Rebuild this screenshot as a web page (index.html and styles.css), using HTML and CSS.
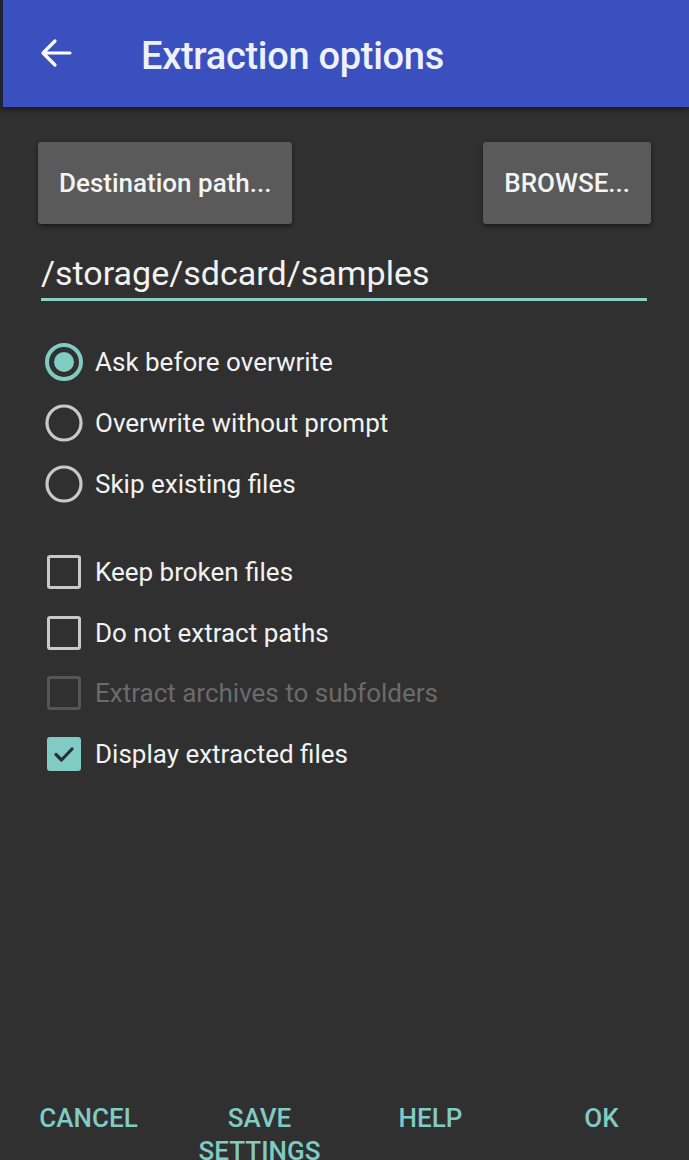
FILE: index.html
```html
<!DOCTYPE html>
<html lang="en">
<head>
  <meta charset="UTF-8" />
  <title>Extraction options</title>
  <meta name="viewport" content="width=device-width, initial-scale=1" />
  <link rel="stylesheet" href="styles.css">
</head>
<body>
  <div class="screen">
    <header class="toolbar">
      <svg class="back" width="36" height="36" viewBox="0 0 36 36">
        <path d="M32 18H6M17 6L5 18l12 12" fill="none" stroke="#fff" stroke-width="3.2" stroke-linecap="round" stroke-linejoin="round"/>
      </svg>
      <h1>Extraction options</h1>
    </header>

    <main class="content">
      <div class="path-buttons">
        <button class="btn">Destination path...</button>
        <button class="btn">BROWSE...</button>
      </div>

      <div class="path-field">/storage/sdcard/samples</div>

      <div class="group">
        <div class="row">
          <span class="slot">
            <svg width="40" height="40" viewBox="0 0 40 40"><circle cx="20" cy="20" r="17" fill="none" stroke="#80cbc4" stroke-width="4"/><circle cx="20" cy="20" r="10" fill="#80cbc4"/></svg>
          </span>
          <span class="label">Ask before overwrite</span>
        </div>
        <div class="row">
          <span class="slot">
            <svg width="40" height="40" viewBox="0 0 40 40"><circle cx="20" cy="20" r="17" fill="none" stroke="#c9c9c9" stroke-width="3.2"/></svg>
          </span>
          <span class="label">Overwrite without prompt</span>
        </div>
        <div class="row">
          <span class="slot">
            <svg width="40" height="40" viewBox="0 0 40 40"><circle cx="20" cy="20" r="17" fill="none" stroke="#c9c9c9" stroke-width="3.2"/></svg>
          </span>
          <span class="label">Skip existing files</span>
        </div>
      </div>

      <div class="group checks">
        <div class="row">
          <span class="slot"><span class="box"></span></span>
          <span class="label">Keep broken files</span>
        </div>
        <div class="row">
          <span class="slot"><span class="box"></span></span>
          <span class="label">Do not extract paths</span>
        </div>
        <div class="row disabled">
          <span class="slot"><span class="box"></span></span>
          <span class="label">Extract archives to subfolders</span>
        </div>
        <div class="row">
          <span class="slot">
            <span class="box checked">
              <svg width="26" height="26" viewBox="0 0 26 26"><path d="M5 13.5l5.5 5.5L21 8" fill="none" stroke="#243238" stroke-width="3.2" stroke-linecap="round" stroke-linejoin="round"/></svg>
            </span>
          </span>
          <span class="label">Display extracted files</span>
        </div>
      </div>
    </main>

    <footer class="actions">
      <span class="action">CANCEL</span>
      <span class="action">SAVE<br>SETTINGS</span>
      <span class="action">HELP</span>
      <span class="action">OK</span>
    </footer>
  </div>
</body>
</html>
```

FILE: styles.css
```css
body { margin: 0; background: #303030; font-family: Roboto, "Liberation Sans", sans-serif; color: #f2f2f2; }
.screen { height: 1160px; display: flex; flex-direction: column; overflow: hidden; }

.toolbar { height: 107px; flex-shrink: 0; background: #3a50bf; border-left: 3px solid #1e2433; display: flex; align-items: center; padding-left: 35px; box-shadow: 0 3px 6px rgba(0,0,0,0.45); }
.toolbar .back { margin-top: -2px; }
.toolbar h1 { margin: 4px 0 0 67px; font-size: 38px; font-weight: 500; color: #eef0fb; letter-spacing: -0.3px; }

.content { padding: 0 38px; }
.path-buttons { display: flex; justify-content: space-between; margin-top: 35px; }
.btn { height: 82px; padding: 0 21px; background: #5a5a5a; color: #f4f4f4; border: none; border-radius: 3px; font-family: inherit; font-size: 26px; font-weight: 500; box-shadow: 0 2px 4px rgba(0,0,0,0.5); }

.path-field { margin: 27px 4px 0 3px; font-size: 34px; line-height: 44px; padding-bottom: 3px; border-bottom: 3px solid #8ccfc9; }

.group { margin-top: 30px; }
.group.checks { margin-top: 28px; }
.row { height: 61px; display: flex; align-items: center; }
.checks .row { height: 60.5px; }
.slot { width: 40px; height: 40px; margin-left: 6px; display: flex; align-items: center; justify-content: center; }
.label { margin-left: 11px; font-size: 26px; }

.box { width: 34px; height: 34px; box-sizing: border-box; border: 3px solid #c9c9c9; border-radius: 3px; display: flex; align-items: center; justify-content: center; }
.box.checked { background: #80cbc4; border-color: #80cbc4; }
.disabled .box { border-color: #555; }
.disabled .label { color: #6b6b6b; }

.actions { margin-top: auto; height: 58px; flex-shrink: 0; display: grid; grid-template-columns: repeat(4, 1fr); padding: 0 2px 0 3px; }
.action { text-align: center; font-size: 26px; line-height: 33px; font-weight: 500; color: #80cbc4; }
```
